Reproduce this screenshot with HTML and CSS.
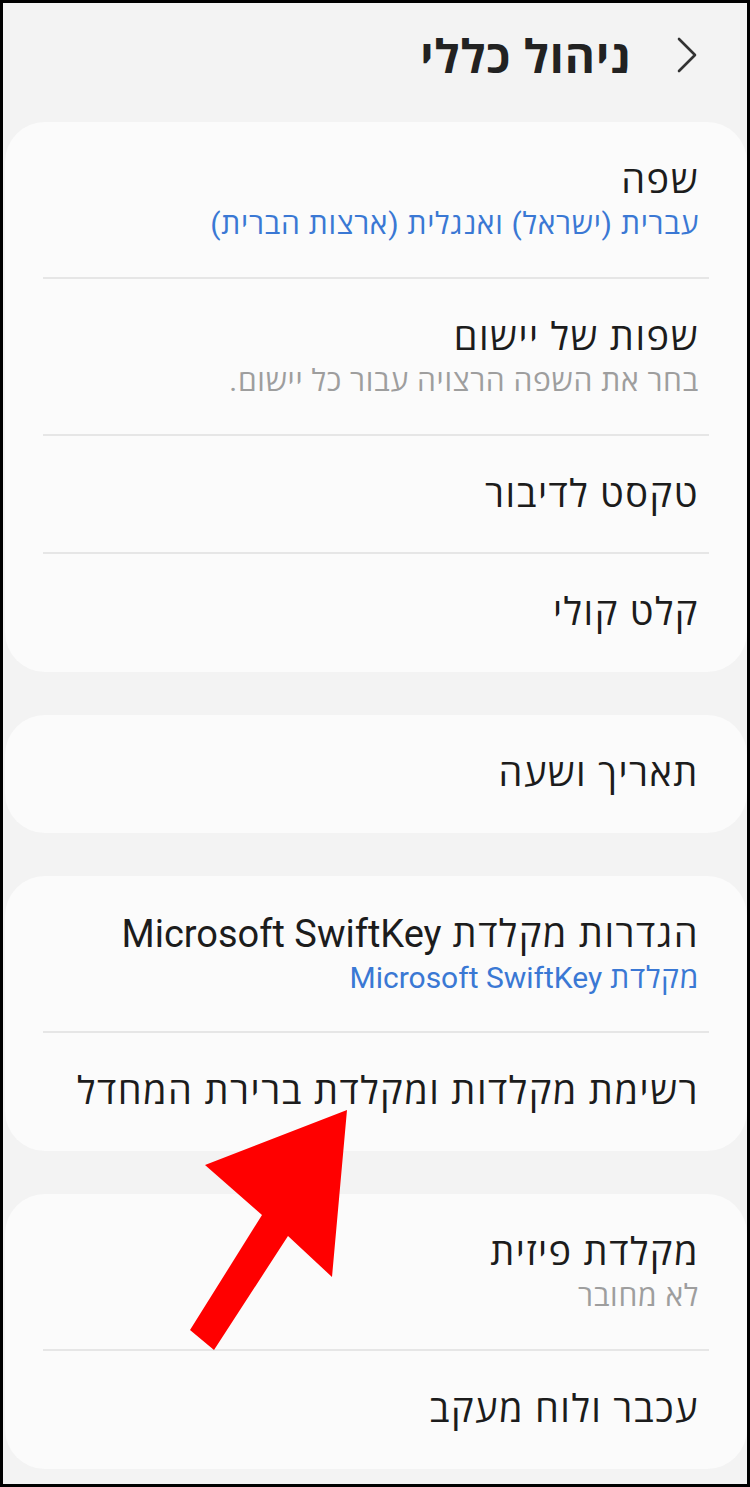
FILE: index.html
```html
<!DOCTYPE html>
<html lang="he" dir="rtl">
<head>
  <meta charset="UTF-8">
  <title>ניהול כללי</title>
  <link rel="stylesheet" href="styles.css">
</head>
<body>
  <div class="screen">
    <!-- כותרת -->
    <header class="topbar">
      <svg class="back" width="20" height="36" viewBox="0 0 20 36">
        <polyline points="2,2 18,18 2,34" fill="none" stroke="#333" stroke-width="2.6" stroke-linecap="round" stroke-linejoin="round"/>
      </svg>
      <h1>ניהול כללי</h1>
    </header>

    <section class="card">
      <div class="row two">
        <div class="title">שפה</div>
        <div class="sub blue">עברית (ישראל) ואנגלית (ארצות הברית)</div>
      </div>
      <div class="row two">
        <div class="title">שפות של יישום</div>
        <div class="sub grey">בחר את השפה הרצויה עבור כל יישום.</div>
      </div>
      <div class="row">
        <div class="title">טקסט לדיבור</div>
      </div>
      <div class="row">
        <div class="title">קלט קולי</div>
      </div>
    </section>

    <section class="card">
      <div class="row">
        <div class="title">תאריך ושעה</div>
      </div>
    </section>

    <section class="card">
      <div class="row two">
        <div class="title">הגדרות מקלדת <span class="en">Microsoft SwiftKey</span></div>
        <div class="sub blue">מקלדת <span class="en">Microsoft SwiftKey</span></div>
      </div>
      <div class="row">
        <div class="title">רשימת מקלדות ומקלדת ברירת המחדל</div>
      </div>
    </section>

    <section class="card">
      <div class="row two">
        <div class="title">מקלדת פיזית</div>
        <div class="sub grey">לא מחובר</div>
      </div>
      <div class="row">
        <div class="title">עכבר ולוח מעקב</div>
      </div>
    </section>

    <!-- חץ הסימון -->
    <svg class="pointer" width="750" height="1487" viewBox="0 0 750 1487">
      <polygon fill="#ff0000" points="347,1110 332,1277 288,1236 214,1350 190,1330 262,1215 205,1165"/>
    </svg>
  </div>
</body>
</html>
```

FILE: styles.css
```css
* { box-sizing: border-box; }

html, body {
  margin: 0;
  padding: 0;
}

body {
  width: 750px;
  height: 1487px;
  overflow: hidden;
  font-family: Roboto, "Open Sans", "Liberation Sans", sans-serif;
  color: #1c1c1c;
}

.screen {
  position: relative;
  width: 750px;
  height: 1487px;
  border: 3px solid #000;
  background-color: #f3f3f3;
  padding: 0 0 0 2px;
  display: flex;
  flex-direction: column;
  gap: 43px;
}

.topbar {
  height: 119px;
  margin-bottom: -43px;
  display: flex;
  align-items: center;
  gap: 46px;
  padding-right: 50px;
  padding-bottom: 15px;
}

.topbar h1 {
  margin: 0;
  font-size: 46px;
  font-weight: 700;
  color: #222;
  letter-spacing: 1px;
}

.back { flex: none; }

.card {
  background-color: #fbfbfb;
  border-radius: 40px;
}

.row {
  margin: 0 38px;
  padding: 35px 10px 35px;
  border-bottom: 2px solid #e6e6e6;
}

.row:last-child {
  border-bottom: none;
  padding-bottom: 37px;
}

.row.two {
  padding-top: 35px;
  padding-bottom: 34px;
}

.title {
  font-size: 38px;
  line-height: 46px;
  letter-spacing: 1.5px;
}

.sub {
  font-size: 30px;
  line-height: 38px;
  margin-top: 2px;
  letter-spacing: 0.7px;
}

.en { letter-spacing: 0; }

.blue { color: #3a78d4; }
.grey { color: #9e9e9e; }

.pointer {
  position: absolute;
  top: -3px;
  left: -3px;
  pointer-events: none;
}
```
